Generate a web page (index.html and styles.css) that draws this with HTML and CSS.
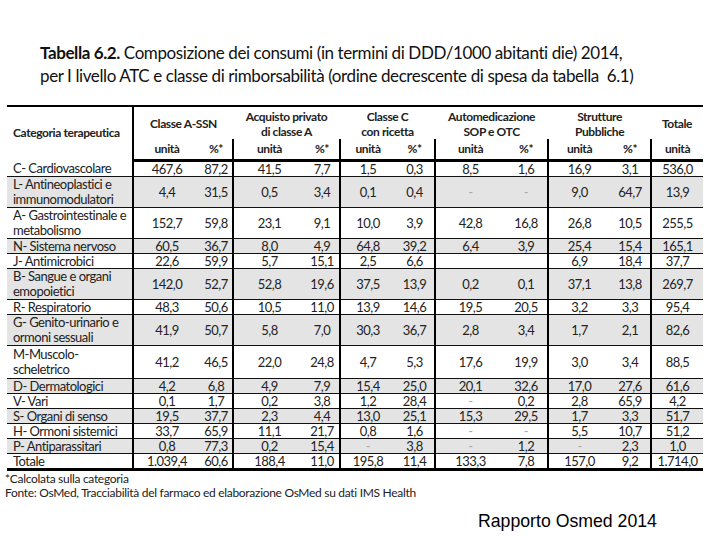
FILE: index.html
```html
<!DOCTYPE html>
<html lang="it">
<head>
<meta charset="utf-8">
<title>Tabella 6.2</title>
<link rel="stylesheet" href="styles.css">
</head>
<body>
<div class="page">
  <h1 class="title"><b>Tabella 6.2.</b> Composizione dei consumi (in termini di DDD/1000 abitanti die) 2014,<br>per I livello ATC e classe di rimborsabilità (ordine decrescente di spesa da tabella&nbsp; 6.1)</h1>
  <table class="data">
    <colgroup>
      <col class="c-cat">
      <col class="c-a1"><col class="c-a2">
      <col class="c-b1"><col class="c-b2">
      <col class="c-c1"><col class="c-c2">
      <col class="c-d1"><col class="c-d2">
      <col class="c-e1"><col class="c-e2">
      <col class="c-tot">
    </colgroup>
    <thead>
      <tr class="h1">
        <th rowspan="2" class="cat">Categoria terapeutica</th>
        <th colspan="2" class="grp">Classe A-SSN</th>
        <th colspan="2" class="grp">Acquisto privato<br>di classe A</th>
        <th colspan="2" class="grp">Classe C<br>con ricetta</th>
        <th colspan="2" class="grp">Automedicazione<br>SOP e OTC</th>
        <th colspan="2" class="grp">Strutture<br>Pubbliche</th>
        <th class="grp">Totale</th>
      </tr>
      <tr class="h2">
        <th>unità</th><th class="g">%*</th>
        <th>unità</th><th class="g">%*</th>
        <th>unità</th><th class="g">%*</th>
        <th>unità</th><th class="g">%*</th>
        <th>unità</th><th class="g">%*</th>
        <th>unità</th>
      </tr>
    </thead>
    <tbody>
      <tr><td class="cat">C- Cardiovascolare</td><td>467,6</td><td class="g">87,2</td><td>41,5</td><td class="g">7,7</td><td>1,5</td><td class="g">0,3</td><td>8,5</td><td class="g">1,6</td><td>16,9</td><td class="g">3,1</td><td>536,0</td></tr>
      <tr class="alt dbl"><td class="cat">L- Antineoplastici e<br>immunomodulatori</td><td>4,4</td><td class="g">31,5</td><td>0,5</td><td class="g">3,4</td><td>0,1</td><td class="g">0,4</td><td class="dash">-</td><td class="g dash">-</td><td>9,0</td><td class="g">64,7</td><td>13,9</td></tr>
      <tr class="dbl"><td class="cat">A- Gastrointestinale e<br>metabolismo</td><td>152,7</td><td class="g">59,8</td><td>23,1</td><td class="g">9,1</td><td>10,0</td><td class="g">3,9</td><td>42,8</td><td class="g">16,8</td><td>26,8</td><td class="g">10,5</td><td>255,5</td></tr>
      <tr class="alt"><td class="cat">N- Sistema nervoso</td><td>60,5</td><td class="g">36,7</td><td>8,0</td><td class="g">4,9</td><td>64,8</td><td class="g">39,2</td><td>6,4</td><td class="g">3,9</td><td>25,4</td><td class="g">15,4</td><td>165,1</td></tr>
      <tr><td class="cat">J- Antimicrobici</td><td>22,6</td><td class="g">59,9</td><td>5,7</td><td class="g">15,1</td><td>2,5</td><td class="g">6,6</td><td></td><td class="g"></td><td>6,9</td><td class="g">18,4</td><td>37,7</td></tr>
      <tr class="alt dbl"><td class="cat">B- Sangue e organi<br>emopoietici</td><td>142,0</td><td class="g">52,7</td><td>52,8</td><td class="g">19,6</td><td>37,5</td><td class="g">13,9</td><td>0,2</td><td class="g">0,1</td><td>37,1</td><td class="g">13,8</td><td>269,7</td></tr>
      <tr><td class="cat">R- Respiratorio</td><td>48,3</td><td class="g">50,6</td><td>10,5</td><td class="g">11,0</td><td>13,9</td><td class="g">14,6</td><td>19,5</td><td class="g">20,5</td><td>3,2</td><td class="g">3,3</td><td>95,4</td></tr>
      <tr class="alt dbl"><td class="cat">G- Genito-urinario e<br>ormoni sessuali</td><td>41,9</td><td class="g">50,7</td><td>5,8</td><td class="g">7,0</td><td>30,3</td><td class="g">36,7</td><td>2,8</td><td class="g">3,4</td><td>1,7</td><td class="g">2,1</td><td>82,6</td></tr>
      <tr class="tall"><td class="cat">M-Muscolo-<br>scheletrico</td><td>41,2</td><td class="g">46,5</td><td>22,0</td><td class="g">24,8</td><td>4,7</td><td class="g">5,3</td><td>17,6</td><td class="g">19,9</td><td>3,0</td><td class="g">3,4</td><td>88,5</td></tr>
      <tr class="alt"><td class="cat">D- Dermatologici</td><td>4,2</td><td class="g">6,8</td><td>4,9</td><td class="g">7,9</td><td>15,4</td><td class="g">25,0</td><td>20,1</td><td class="g">32,6</td><td>17,0</td><td class="g">27,6</td><td>61,6</td></tr>
      <tr><td class="cat">V- Vari</td><td>0,1</td><td class="g">1,7</td><td>0,2</td><td class="g">3,8</td><td>1,2</td><td class="g">28,4</td><td class="dash">-</td><td class="g">0,2</td><td>2,8</td><td class="g">65,9</td><td>4,2</td></tr>
      <tr class="alt"><td class="cat">S- Organi di senso</td><td>19,5</td><td class="g">37,7</td><td>2,3</td><td class="g">4,4</td><td>13,0</td><td class="g">25,1</td><td>15,3</td><td class="g">29,5</td><td>1,7</td><td class="g">3,3</td><td>51,7</td></tr>
      <tr><td class="cat">H- Ormoni sistemici</td><td>33,7</td><td class="g">65,9</td><td>11,1</td><td class="g">21,7</td><td>0,8</td><td class="g">1,6</td><td class="dash">-</td><td class="g dash">-</td><td>5,5</td><td class="g">10,7</td><td>51,2</td></tr>
      <tr class="alt"><td class="cat">P- Antiparassitari</td><td>0,8</td><td class="g">77,3</td><td>0,2</td><td class="g">15,4</td><td class="dash">-</td><td class="g">3,8</td><td class="dash">-</td><td class="g">1,2</td><td class="dash">-</td><td class="g">2,3</td><td>1,0</td></tr>
      <tr class="total"><td class="cat">Totale</td><td>1.039,4</td><td class="g">60,6</td><td>188,4</td><td class="g">11,0</td><td>195,8</td><td class="g">11,4</td><td>133,3</td><td class="g">7,8</td><td>157,0</td><td class="g">9,2</td><td>1.714,0</td></tr>
    </tbody>
  </table>
  <p class="note">*Calcolata sulla categoria</p>
  <p class="note">Fonte: OsMed, Tracciabilità del farmaco ed elaborazione OsMed su dati IMS Health</p>
  <p class="credit">Rapporto Osmed 2014</p>
</div>
</body>
</html>
```

FILE: styles.css
```css
html, body {
  margin: 0;
  padding: 0;
  background: #ffffff;
}

.page {
  width: 720px;
  height: 540px;
  padding-top: 41px;
  box-sizing: border-box;
  font-family: Lato, "Open Sans", sans-serif;
  color: #1a1a1a;
  overflow: hidden;
}

.title {
  margin: 0 0 0 40px;
  font-size: 17px;
  letter-spacing: -0.4px;
  font-weight: normal;
  line-height: 23px;
  color: #111;
  height: 64px;
}

.title b {
  font-weight: bold;
}

.data {
  margin-left: 7px;
  width: 696px;
  border-collapse: collapse;
  table-layout: fixed;
  font-size: 13px;
  letter-spacing: -0.5px;
  line-height: 14px;
  border-top: 2px solid #000;
  border-bottom: 3px solid #000;
}

.c-cat { width: 126px; }
.c-a1 { width: 67px; }
.c-a2 { width: 33px; }
.c-b1 { width: 72px; }
.c-b2 { width: 35px; }
.c-c1 { width: 55px; }
.c-c2 { width: 40px; }
.c-d1 { width: 70px; }
.c-d2 { width: 43px; }
.c-e1 { width: 62px; }
.c-e2 { width: 41px; }
.c-tot { width: 52px; }

.data th, .data td {
  padding: 0 2px;
  text-align: center;
  vertical-align: middle;
  white-space: nowrap;
}

.data th {
  font-weight: bold;
  font-size: 12px;
  letter-spacing: -0.4px;
  color: #222;
}

.data .cat {
  text-align: left;
  padding-left: 6px;
  border-right: 2px solid #000;
}

.data .g {
  border-right: 2px solid #000;
}

.data tr > :last-child {
  border-right: none;
}

.h1 th {
  height: 31px;
  padding-top: 1px;
  line-height: 15px;
}

.h1 th.cat {
  padding-top: 0;
  padding-bottom: 3px;
}

.h2 th {
  height: 20px;
  border-bottom: 3px solid #000;
}

.data tbody td {
  height: 14px;
  border-bottom: 1px solid #111;
  color: #222;
}

.data tbody tr.dbl td {
  line-height: 15px;
}

.data tbody tr.alt td {
  background: #e4e4e4;
}

.data tbody tr.tall td {
  line-height: 15px;
  padding-top: 1px;
  padding-bottom: 1px;
}

.data tbody td.dash {
  color: #aaa;
}

.data tbody tr.total td {
  border-bottom: 3px solid #000;
}

.note {
  margin: 1px 0 0 5px;
  font-size: 12px;
  letter-spacing: -0.3px;
  line-height: 14px;
  color: #222;
}

.note + .note {
  margin-top: 0;
}

.credit {
  margin: 11px 0 0 478px;
  font-family: "Liberation Sans", Arial, sans-serif;
  font-size: 17.7px;
  line-height: 20px;
  color: #000;
}
```
